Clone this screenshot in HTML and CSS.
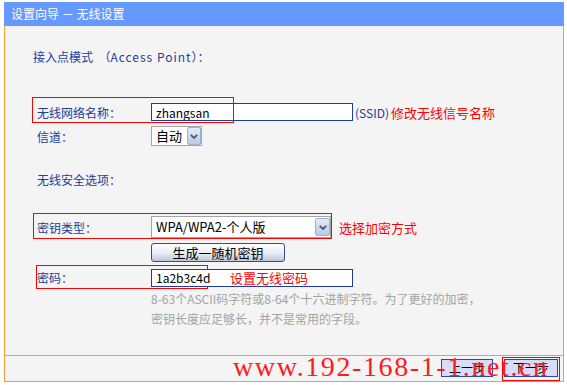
FILE: index.html
```html
<!DOCTYPE html>
<html lang="zh-CN">
  <head>
    <meta charset="UTF-8" />
    <meta name="viewport" content="width=device-width, initial-scale=1.0" />
    <title>设置向导 - 无线设置</title>
    <link rel="stylesheet" href="styles.css">
  </head>
  <body>
    <div class="wizard">
      <div class="wizard-title">设置向导 － 无线设置</div>
      <div class="wizard-body">
        <p class="section">接入点模式 &nbsp;（<span class="latin">Access Point</span>）：</p>

        <div class="row row-ssid">
          <span class="mark mark-ssid"></span>
          <label class="label" for="ssid">无线网络名称：</label>
          <input class="text-input" type="text" id="ssid" value="zhangsan" />
          <span class="suffix">(SSID)</span>
          <span class="hint">修改无线信号名称</span>
        </div>

        <div class="row row-channel">
          <label class="label">信道：</label>
          <div class="select select-channel">
            <span class="select-text">自动</span>
            <span class="select-arrow">
              <svg width="8" height="5" viewBox="0 0 8 5"><polyline points="0.8,0.8 4,4 7.2,0.8" fill="none" stroke="#4a5878" stroke-width="1.8"/></svg>
            </span>
          </div>
        </div>

        <p class="section section-security">无线安全选项：</p>

        <div class="row row-keytype">
          <span class="mark mark-keytype"></span>
          <label class="label">密钥类型：</label>
          <div class="select select-keytype">
            <span class="select-text">WPA/WPA2-个人版</span>
            <span class="select-arrow">
              <svg width="8" height="5" viewBox="0 0 8 5"><polyline points="0.8,0.8 4,4 7.2,0.8" fill="none" stroke="#4a5878" stroke-width="1.8"/></svg>
            </span>
          </div>
          <span class="hint hint-keytype">选择加密方式</span>
        </div>

        <div class="row row-button">
          <span class="label"></span>
          <button class="gen-btn" type="button">生成一随机密钥</button>
        </div>

        <div class="row row-password">
          <span class="mark mark-password"></span>
          <label class="label" for="pwd">密码：</label>
          <div class="pwd-field">
            <input class="text-input pwd-input" type="text" id="pwd" value="1a2b3c4d" />
            <span class="hint hint-pwd">设置无线密码</span>
          </div>
        </div>

        <p class="help">8-63个ASCII码字符或8-64个十六进制字符。为了更好的加密，<br />密钥长度应足够长，并不是常用的字段。</p>
      </div>
      <div class="wizard-foot">
        <span class="watermark">www.192-168-1-1.net.cn</span>
        <button class="nav-btn btn-prev" type="button">上一步</button>
        <button class="nav-btn btn-next" type="button">下一步<span class="mark mark-next"></span></button>
      </div>
    </div>
  </body>
</html>
```

FILE: styles.css
```css
* {
  margin: 0;
  padding: 0;
  box-sizing: border-box;
}
body {
  background-color: #fff;
  font-family: "Noto Sans CJK SC", "DejaVu Sans", sans-serif;
  font-size: 12px;
  color: #1e3c99;
}
.wizard {
  width: 560px;
  margin: 2px 0 0 4px;
}
.wizard-title {
  height: 24px;
  line-height: 24px;
  padding-left: 7px;
  background-color: #6699ff;
  color: #fff;
  font-size: 12px;
}
.wizard-body {
  height: 329px;
  padding: 21px 0 0 28px;
  background-color: #f4f4f4;
  border-left: 1px solid #ff9933;
  border-right: 1px solid #ff9933;
}
.section {
  height: 20px;
  line-height: 20px;
}
.latin {
  letter-spacing: 1px;
}
.section-security {
  margin-top: 22px;
  margin-left: 4px;
}
.row {
  position: relative;
  display: flex;
  align-items: center;
  margin-left: 4px;
}
.label {
  width: 114px;
  flex: none;
}
.row-ssid {
  height: 24px;
  margin-top: 33px;
}
.row-channel {
  height: 24px;
}
.row-keytype {
  height: 24px;
  margin-top: 25px;
}
.row-button {
  height: 19px;
  margin-top: 4px;
}
.row-password {
  height: 23px;
  margin-top: 4px;
}
.text-input {
  width: 202px;
  height: 18px;
  padding: 0 4px;
  border: 1px solid #1b3d9c;
  background-color: #fff;
  color: #000;
  font-family: "Noto Sans CJK SC", "DejaVu Sans", sans-serif;
  font-size: 12px;
  outline: none;
}
.suffix {
  margin-left: 2px;
}
.hint {
  margin-left: 2px;
  color: #ff0000;
  font-size: 13px;
}
.hint-keytype {
  margin-left: 8px;
}
.pwd-field {
  position: relative;
  display: flex;
  align-items: center;
}
.hint-pwd {
  position: absolute;
  left: 77px;
  top: 0;
  line-height: 18px;
}
.select {
  display: flex;
  height: 20px;
  border: 1px solid #a4a4a4;
  background-color: #fff;
  color: #000;
}
.select-text {
  flex: 1;
  padding-left: 4px;
  font-size: 13px;
  line-height: 18px;
}
.select-arrow {
  width: 14px;
  display: flex;
  align-items: center;
  justify-content: center;
  border: 1px solid #9fb2d2;
  border-radius: 2px;
  background: linear-gradient(#e3ebf7, #b8cae6);
}
.select-channel {
  width: 51px;
}
.select-keytype {
  width: 180px;
  height: 22px;
  padding: 1px 0;
}
.select-keytype .select-arrow {
  width: 15px;
}
.gen-btn {
  width: 134px;
  height: 19px;
  border: 1px solid #35507f;
  border-radius: 3px;
  background: linear-gradient(#ffffff, #e8ecf4 55%, #bcc6da);
  color: #000;
  font-family: "Noto Sans CJK SC", "DejaVu Sans", sans-serif;
  font-size: 13px;
  line-height: 17px;
}
.help {
  margin-left: 118px;
  line-height: 20px;
  color: #a3a3a3;
}
.mark {
  position: absolute;
  border: 1px solid #ff0000;
  pointer-events: none;
}
.mark-ssid {
  left: -5px;
  top: -3px;
  width: 202px;
  height: 26px;
}
.mark-keytype {
  left: -4px;
  top: -2px;
  width: 299px;
  height: 26px;
}
.mark-password {
  left: -1px;
  top: -1px;
  width: 172px;
  height: 24px;
}
.wizard-foot {
  position: relative;
  display: flex;
  justify-content: flex-end;
  align-items: flex-start;
  gap: 11px;
  height: 27px;
  padding: 3px 5px 0 0;
  border: 1px solid #ff9933;
  background-color: #f4f4f4;
}
.nav-btn {
  position: relative;
  height: 18px;
  border: 1px solid #2a48a8;
  background-color: #d9dcf8;
  color: #000;
  font-family: "Noto Sans CJK SC", "DejaVu Sans", sans-serif;
  font-size: 12px;
  line-height: 16px;
}
.btn-prev {
  width: 52px;
}
.btn-next {
  width: 54px;
}
.mark-next {
  left: -3px;
  top: -3px;
  width: 58px;
  height: 24px;
}
.watermark {
  position: absolute;
  left: 228px;
  top: -3px;
  z-index: 2;
  font-family: "Liberation Serif", serif;
  font-size: 28px;
  line-height: 28px;
  letter-spacing: 1.6px;
  color: #ff1a1a;
  white-space: nowrap;
  pointer-events: none;
}
```
